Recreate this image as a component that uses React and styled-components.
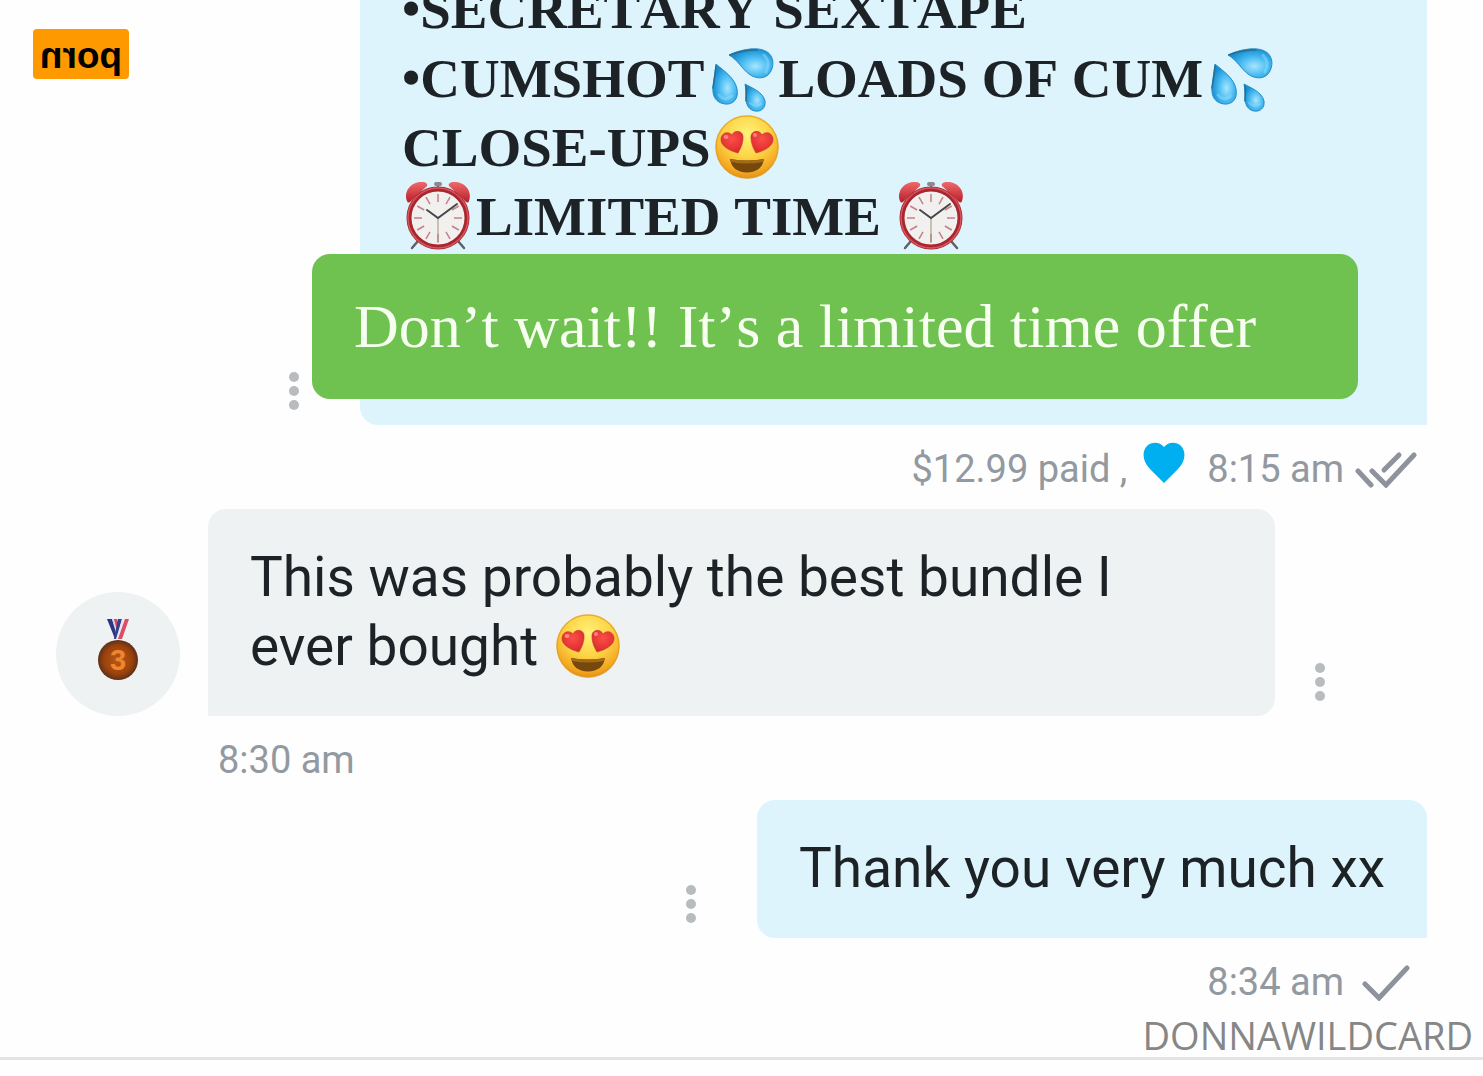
import React from 'react';
import styled, { createGlobalStyle } from 'styled-components';

const GlobalStyle = createGlobalStyle`
    * {
      box-sizing: border-box;
    }

    body {
      margin: 0;
      background-color: #fefefe;
    }
`

const Page = styled.main`
    position: relative;
    display: flex;
    flex-direction: column;
    justify-content: flex-end;
    height: 100vh;
    overflow: hidden;
    font-family: Roboto, "Liberation Sans", sans-serif;
    color: #1c2226;
`

const Thread = styled.section`
    display: flex;
    flex-direction: column;
    flex-shrink: 0;
    padding: 0 56px 35px;
`

const Divider = styled.hr`
    flex-shrink: 0;
    width: 100%;
    height: 3px;
    margin: 0 0 16px;
    border: none;
    background-color: #e4e4e4;
`

const Row = styled.div`
    display: flex;
    align-items: flex-end;
    justify-content: ${({ $sent }) => ($sent ? 'flex-end' : 'flex-start')};
`

const Bubble = styled.div`
    position: relative;
    max-width: calc(100% - 304px);
    padding: 34px 42px 35px;
    border-radius: ${({ $sent }) => ($sent ? '18px 18px 0 18px' : '18px 18px 18px 0')};
    background-color: ${({ $sent }) => ($sent ? '#def4fd' : '#eef2f3')};
    font-size: 55px;
    line-height: 69px;
`

const ReceivedBubble = styled(Bubble)`
    flex: 1;
    padding-right: 120px;
`

const PromoBubble = styled(Bubble)`
    flex: 1;
    padding-bottom: 174px;
    font-family: "Liberation Serif", serif;
    font-weight: bold;
    font-kerning: none;
`

const Paragraph = styled.p`
    margin: 0;
`

const Bullet = styled.span`
    font-size: 52px;
    line-height: 1;
    vertical-align: 2px;
`

const Banner = styled.div`
    position: absolute;
    left: -48px;
    right: 69px;
    bottom: 26px;
    padding: 38px 42px;
    border-radius: 18px;
    background-color: #6fc24f;
    color: #f6fff0;
    font-size: 62px;
    font-weight: normal;
    line-height: 69px;
`

const Meta = styled.div`
    display: flex;
    align-items: center;
    justify-content: ${({ $sent }) => ($sent ? 'flex-end' : 'flex-start')};
    height: 84px;
    padding: 4px 8px 0 ${({ $sent }) => ($sent ? '0' : '162px')};
    color: #9299a0;
    font-size: 38px;
    line-height: 46px;
    white-space: pre;
`

const Avatar = styled.div`
    display: flex;
    align-items: center;
    justify-content: center;
    width: 124px;
    height: 124px;
    margin-right: 28px;
    padding-bottom: 8px;
    border-radius: 50%;
    background-color: #eef2f3;
`

const MenuButton = styled.button`
    display: flex;
    flex-direction: column;
    gap: 4px;
    margin: ${({ $sent }) => ($sent ? '0 61px 15px 0' : '0 0 15px 40px')};
    padding: 0;
    border: none;
    background: none;
    cursor: pointer;
`

const Dot = styled.span`
    width: 10px;
    height: 10px;
    border-radius: 50%;
    background-color: #b9bcbe;
`

const EmojiSvg = styled.svg`
    display: inline-block;
    width: 74px;
    height: 66px;
    vertical-align: -15px;
    overflow: visible;
`

const HeartSvg = styled.svg`
    width: 42px;
    height: 42px;
    margin: 0 22px 12px 16px;
`

const TickSvg = styled.svg`
    width: 66px;
    height: 38px;
    margin-left: 9px;
`

const Logo = styled.div`
    position: absolute;
    top: 29px;
    left: 33px;
    display: flex;
    justify-content: center;
    width: 96px;
    height: 50px;
    border-radius: 4px;
    background-color: #ff9900;
    color: #000000;
    font-family: "Liberation Sans", sans-serif;
    font-size: 37px;
    font-weight: bold;
    line-height: 54px;
    transform: scaleX(-1);
`

const Watermark = styled.div`
    position: absolute;
    right: 10px;
    bottom: 15px;
    color: #868686;
    font-family: "Open Sans", "Noto Sans", sans-serif;
    font-size: 38px;
    line-height: 52px;
`

const HiddenSvg = styled.svg`
    position: absolute;
`

const Menu = ({ $sent }) => (
    <MenuButton $sent={$sent} aria-label="Message options">
        <Dot />
        <Dot />
        <Dot />
    </MenuButton>
)

const Gradients = () => (
    <HiddenSvg width="0" height="0" aria-hidden="true">
        <defs>
            <radialGradient id="face" cx="0.5" cy="0.3" r="0.72">
                <stop offset="0" stopColor="#fff27a" />
                <stop offset="0.5" stopColor="#fdd445" />
                <stop offset="0.85" stopColor="#f3a620" />
                <stop offset="1" stopColor="#dd8a12" />
            </radialGradient>
            <radialGradient id="eye" cx="0.5" cy="0.35" r="0.7">
                <stop offset="0" stopColor="#fb4f48" />
                <stop offset="1" stopColor="#d9262b" />
            </radialGradient>
            <radialGradient id="drop" cx="0.6" cy="0.6" r="0.6">
                <stop offset="0" stopColor="#a6e6fd" />
                <stop offset="0.5" stopColor="#4dbdf3" />
                <stop offset="1" stopColor="#168fd3" />
            </radialGradient>
            <linearGradient id="bell" x1="0" y1="0" x2="0" y2="1">
                <stop offset="0" stopColor="#f0696b" />
                <stop offset="1" stopColor="#b51f2a" />
            </linearGradient>
            <radialGradient id="bronze">
                <stop offset="0" stopColor="#b65a17" />
                <stop offset="0.7" stopColor="#9c430c" />
                <stop offset="1" stopColor="#5f3017" />
            </radialGradient>
        </defs>
    </HiddenSvg>
)

const HeartEyes = () => (
    <EmojiSvg viewBox="0 0 74 66" role="img" aria-label="heart eyes">
        <circle cx="36" cy="32" r="31.5" fill="url(#face)" />
        <circle cx="36" cy="32" r="31" fill="none" stroke="#e39a1c" strokeWidth="1.5" opacity="0.7" />
        <g fill="url(#eye)" stroke="#c9352a" strokeWidth="0.6">
            <path d="M27 38C19 36 9 31 10 23.5C11 17 18 16 21 20C23 15 31 15 32 21C32.500 27 30 33 27 38Z" />
            <path d="M45 38C53 36 63 31 62 23.5C61 17 54 16 51 20C49 15 41 15 40 21C39.500 27 42 33 45 38Z" />
        </g>
        <ellipse cx="15" cy="22" rx="2.500" ry="2" fill="#ff9a8f" opacity="0.8" />
        <ellipse cx="44" cy="20" rx="2" ry="2" fill="#ff9a8f" opacity="0.8" />
        <path d="M19 44Q36 47 53 44Q51 57 36 57.500Q21 57 19 44Z" fill="#76480c" />
        <path d="M19 44Q36 47 53 44L52 47Q36 50 20 47Z" fill="#a36a18" />
    </EmojiSvg>
)

const Drops = () => (
    <EmojiSvg viewBox="-5 0 74 66" role="img" aria-label="sweat droplets">
        <g fill="url(#drop)" stroke="#238fc9" strokeWidth="1">
            <path d="M20 9C30 4 45 1 54 4C64 7 66 17 62 25C58 33 48 34 40 28C33 23 29 14 20 9Z" />
            <path d="M7 18C15 25 26 32 28 43C30 53 24 59 16 58C7 57 3 50 4 41C5 33 6 27 7 18Z" />
            <path d="M36 38C43 42 54 46 56 55C57 62 52 66 46 65C40 64 37 59 37 52C37 47 37 43 36 38Z" />
        </g>
        <g fill="none" stroke="#286f90" strokeWidth="1.5" strokeLinecap="round">
            <path d="M21 9C31 5 41 4 48 4" />
            <path d="M7 20C6 29 5 35 4 42" />
            <path d="M37 40C38 46 37 50 37 55" />
        </g>
        <path d="M55 9Q62 16 57 26" fill="none" stroke="#9fe4fb" strokeWidth="3" strokeLinecap="round" opacity="0.4" />
        <path d="M10 49Q15 56 23 50" fill="none" stroke="#9fe4fb" strokeWidth="3" strokeLinecap="round" opacity="0.4" />
        <path d="M41 57Q46 62 52 58" fill="none" stroke="#9fe4fb" strokeWidth="2" strokeLinecap="round" opacity="0.4" />
    </EmojiSvg>
)

const Clock = () => (
    <EmojiSvg viewBox="-1 0 74 66" role="img" aria-label="alarm clock">
        <path d="M15 57L9 64M55 57L61 64" stroke="#5e6266" strokeWidth="2.500" strokeLinecap="round" />
        <rect x="31" y="-2" width="8" height="4" rx="2" fill="#878b8f" />
        <path d="M35 1V5" stroke="#878b8f" strokeWidth="2" />
        <path d="M4 17C0 7 9 -3 19 -2C23 -2 25 0 24 2L8 17Q5 20 4 17Z" fill="url(#bell)" />
        <path d="M66 17C70 7 61 -3 51 -2C47 -2 45 0 46 2L62 17Q65 20 66 17Z" fill="url(#bell)" />
        <circle cx="35" cy="34" r="29" fill="#f2f0ee" stroke="#a82630" strokeWidth="5" />
        <circle cx="35" cy="34" r="30" fill="none" stroke="#d8545a" strokeWidth="1.500" />
        <g stroke="#c4808a" strokeWidth="1.500">
            {[0, 30, 60, 90, 120, 150, 180, 210, 240, 270, 300, 330].map((angle) => (
                <path key={angle} d="M35 10V18" transform={`rotate(${angle} 35 34)`} />
            ))}
        </g>
        <path d="M35 34V59" stroke="#a3906f" strokeWidth="1" />
        <path d="M24 26L35 34L54 20" fill="none" stroke="#44484a" strokeWidth="2" strokeLinecap="round" />
    </EmojiSvg>
)

const Medal = () => (
    <svg width="42" height="62" viewBox="0 0 42 62" role="img" aria-label="bronze medal">
        <path d="M10 0H15L22 20H18Z" fill="#2b3784" />
        <path d="M15 0H18L23 18L21 21Z" fill="#dad3e8" />
        <path d="M17 0H20L23 11L21 16Z" fill="#d9475d" />
        <path d="M21 0H25L20 20H17Z" fill="#31408f" />
        <path d="M25 0H28L22 20H19Z" fill="#ece5ef" />
        <path d="M28 0H32L25 20H21Z" fill="#dc4c62" />
        <circle cx="21" cy="41" r="20" fill="url(#bronze)" />
        <text x="21" y="51" textAnchor="middle" fill="#ef852e" fontFamily="Liberation Sans, sans-serif" fontSize="29" fontWeight="bold">3</text>
    </svg>
)

const Heart = () => (
    <HeartSvg viewBox="0 0 42 42" aria-label="liked">
        <path d="M21 41L7 27C-1 19 -1 9 4 4C9 -1 17 0 21 5C25 0 33 -1 38 4C43 9 43 19 35 27Z" fill="#00aff0" />
    </HeartSvg>
)

const Tick = ({ double }) => (
    <TickSvg viewBox="0 0 66 38" fill="none" stroke="#8e929d" strokeWidth="5" strokeLinecap="round">
        {double ? (
            <>
                <path d="M5 21L18 35" />
                <path d="M19 21L33 35L61 5" />
                <path d="M31 20L46 5" />
            </>
        ) : (
            <path d="M12 21L26 35L54 5" />
        )}
    </TickSvg>
)

export default function App() {
  return (
      <Page>
        <GlobalStyle />
        <Gradients />
        <Thread>
            <Row $sent>
                <Menu $sent />
                <PromoBubble $sent>
                    <Paragraph><Bullet>•</Bullet>SECRETARY SEXTAPE</Paragraph>
                    <Paragraph><Bullet>•</Bullet>CUMSHOT<Drops />LOADS OF CUM<Drops /></Paragraph>
                    <Paragraph>CLOSE-UPS<HeartEyes /></Paragraph>
                    <Paragraph><Clock />LIMITED TIME <Clock /></Paragraph>
                    <Banner>Don’t wait!! It’s a limited time offer</Banner>
                </PromoBubble>
            </Row>
            <Meta $sent>
                <span>$12.99 paid ,</span>
                <Heart />
                <time>8:15 am</time>
                <Tick double />
            </Meta>

            <Row>
                <Avatar><Medal /></Avatar>
                <ReceivedBubble>
                    This was probably the best bundle I ever bought <HeartEyes />
                </ReceivedBubble>
                <Menu />
            </Row>
            <Meta><time>8:30 am</time></Meta>

            <Row $sent>
                <Menu $sent />
                <Bubble $sent>Thank you very much xx</Bubble>
            </Row>
            <Meta $sent>
                <time>8:34 am</time>
                <Tick />
            </Meta>
        </Thread>
        <Divider />
        <Logo>porn</Logo>
        <Watermark>DONNAWILDCARD</Watermark>
      </Page>
  )
}
